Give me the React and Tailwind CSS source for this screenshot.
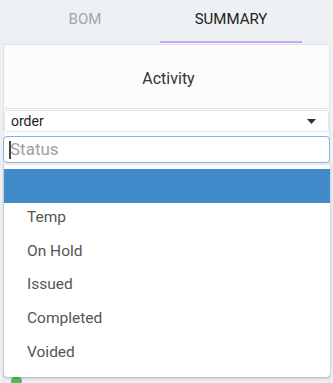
import React from "react";

export default function App() {
  const items = ["Temp", "On Hold", "Issued", "Completed", "Voided"];
  return (
    <div
      className="w-[333px] h-[383px] overflow-hidden bg-[#eef1f3] relative"
      style={{ fontFamily: "Roboto, 'Liberation Sans', sans-serif" }}
    >
      {/* Tabs */}
      <div className="flex h-[44px] pl-[14px] gap-[4px]">
        <div className="w-[142px] h-[43px] flex items-center justify-center text-[15px] text-[#9ea5b5] pb-[5px]">
          BOM
        </div>
        <div className="w-[142px] h-[43px] flex items-center justify-center text-[15px] text-[#222] border-b-2 border-[#c9a6f2] pb-[3px]">
          SUMMARY
        </div>
      </div>

      {/* Card */}
      <div className="mx-[3px] border border-[#dfe3e6] bg-[#fcfcfc] h-[340px] flex flex-col">
        <div className="h-[64px] flex items-center justify-center text-[16px] text-[#333] border-b border-[#e3e6e9] pl-[4px] pt-[4px]">
          Activity
        </div>
        <div className="mt-[1px] h-[22px] mx-0 bg-white rounded-[3px] border border-[#e6e8ea] flex items-center justify-between pl-[6px] pr-[12px] text-[14px] text-[#222]">
          <span>order</span>
          <svg width="9" height="5" viewBox="0 0 9 5">
            <path d="M0 0 L9 0 L4.5 5 Z" fill="#333" />
          </svg>
        </div>
        <div className="mt-[4px] h-[27px] -mx-[1px] bg-white rounded-[4px] border border-[#7fb5ea] flex items-center pl-[5px] text-[17px] text-[#a0a0a0]">
          <span className="w-[2px] h-[18px] bg-[#444] mr-[-1px]"></span>
          <span>Status</span>
        </div>
        <div className="flex-1 bg-[#eceff1] mt-[2px]"></div>
      </div>

      {/* Row behind dropdown */}
      <div className="absolute left-[11px] top-[376px] flex items-center gap-[6px]">
        <span className="w-[11px] h-[11px] rounded-full bg-[#5cb85c]"></span>
      </div>

      {/* Dropdown */}
      <div className="absolute left-[4px] top-[164px] w-[326px] h-[213px] bg-white rounded-b-[4px] border-t border-[#e6e6e6] shadow-[0_1px_3px_rgba(0,0,0,0.3)] pt-[4px]">
        <div className="h-[34px] bg-[#428bca]"></div>
        {items.map((t) => (
          <div
            key={t}
            className="h-[33.6px] flex items-center pl-[23px] text-[15.5px] text-[#555] pb-[4px]"
          >
            {t}
          </div>
        ))}
      </div>
    </div>
  );
}
